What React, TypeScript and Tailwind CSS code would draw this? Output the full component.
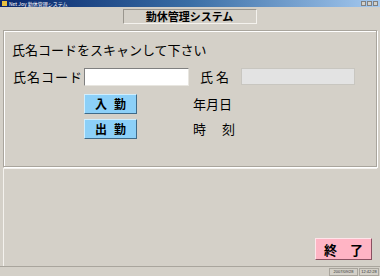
const jp = { fontFamily: '"Noto Sans CJK JP", "Noto Sans", sans-serif' };
const sans = { fontFamily: '"Liberation Sans", sans-serif' };

const TitleBar = () => (
  <div className="flex h-[7px] items-center justify-between bg-gradient-to-r from-[#0a246a] via-[#3a6ea5] to-[#a6caf0] pl-[2px] pr-[2px]">
    <div className="flex items-center gap-[2px]">
      <div className="h-[5px] w-[5px] bg-[#e8c040]" />
      <span className="text-[5px] leading-none text-white" style={jp}>
        Net Joy 勤休管理システム
      </span>
    </div>
    <div className="flex gap-[1px]">
      <div className="h-[5px] w-[5px] border border-[#808080] bg-[#d4d0c8]" />
      <div className="h-[5px] w-[5px] border border-[#808080] bg-[#d4d0c8]" />
      <div className="h-[5px] w-[5px] border border-[#808080] bg-[#d4d0c8]" />
    </div>
  </div>
);

const BlueButton = ({ a, b }: { a: string; b: string }) => (
  <button className="flex h-[20px] w-[53px] items-center justify-between border border-t-[#cfeefe] border-l-[#cfeefe] border-b-[#3f6a88] border-r-[#3f6a88] bg-[#8cd0f8] px-[10px] text-[12px] font-bold leading-none">
    <span>{a}</span>
    <span>{b}</span>
  </button>
);

export default function App() {
  return (
    <div className="flex h-[276px] w-[380px] flex-col bg-[#d4d0c8] text-black" style={jp}>
      <TitleBar />

      <div className="flex justify-center pt-[2px]">
        <div className="ml-[-1px] flex h-[15px] w-[134px] items-center justify-center border border-t-[#9a968e] border-l-[#9a968e] border-b-[#f4f2ee] border-r-[#f4f2ee] text-[11px] font-bold leading-none">
          勤休管理システム
        </div>
      </div>

      <div className="mx-[3px] mt-[6px] h-[137px] border border-[#a9a59d] shadow-[inset_1px_1px_0_#fff,1px_1px_0_#fff] pl-[8px] pt-[11px]">
        <div className="text-[13px] leading-[16px]">氏名コードをスキャンして下さい</div>

        <div className="mt-[9px] flex items-center">
          <span className="ml-[1px] w-[71px] text-[13px] tracking-[1px]">氏名コード</span>
          <div className="h-[18px] w-[105px] border border-t-[#808080] border-l-[#808080] border-b-[#e8e6e0] border-r-[#e8e6e0] bg-white" />
          <span className="ml-[11px] w-[41px] text-[13px]">氏 名</span>
          <div className="h-[17px] w-[114px] border border-[#c8c6c0] bg-[#e3e3e3]" />
        </div>

        <div className="mt-[7px] flex">
          <div className="ml-[72px] flex flex-col gap-[5px]">
            <BlueButton a="入" b="勤" />
            <BlueButton a="出" b="勤" />
          </div>
          <div className="ml-[56px] flex flex-col gap-[5px] text-[13px]">
            <div className="flex h-[20px] items-center">年月日</div>
            <div className="flex h-[20px] w-[42px] items-center justify-between">
              <span>時</span>
              <span>刻</span>
            </div>
          </div>
        </div>
      </div>

      <div className="mx-[3px] mt-[1px] flex flex-1 items-end justify-end border-l border-t border-[#f4f2ee] pb-[6px] pr-[5px]">
        <button className="flex h-[22px] w-[57px] items-center justify-between border border-t-[#ffe4ea] border-l-[#ffe4ea] border-b-[#8a5060] border-r-[#8a5060] bg-[#ffb4c4] px-[8px] text-[13px] font-bold leading-none">
          <span>終</span>
          <span>了</span>
        </button>
      </div>

      <div className="flex h-[10px] items-center justify-end gap-[1px] border-t border-[#a9a59d] pr-[1px]">
        <div className="flex h-[8px] w-[29px] items-center justify-center overflow-hidden border border-[#a9a59d] text-[4px] leading-none text-[#333]" style={sans}>
          2007/09/28
        </div>
        <div className="flex h-[8px] w-[20px] items-center justify-center overflow-hidden border border-[#a9a59d] text-[4px] leading-none text-[#333]" style={sans}>
          12:42:28
        </div>
      </div>
    </div>
  );
}
